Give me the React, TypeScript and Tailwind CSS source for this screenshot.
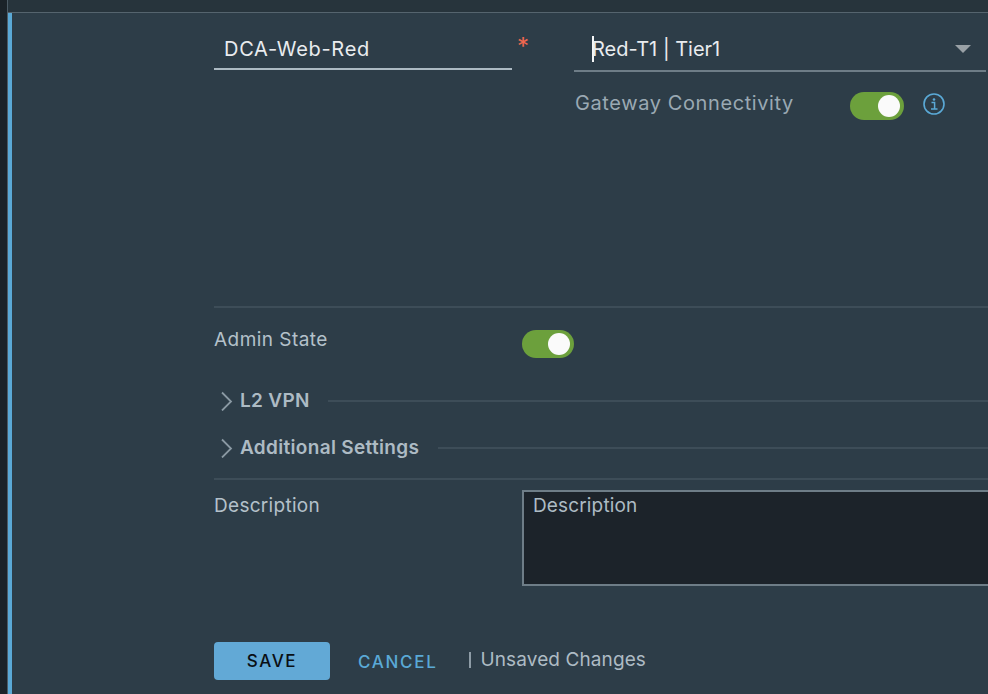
const font = "font-['Inter','Liberation_Sans',sans-serif]";

function Toggle({ width }: { width: string }) {
    return (
        <div className={`${width} flex h-7 shrink-0 items-center justify-end rounded-full bg-[#6ca03c] pr-[4px]`}>
            <div className="h-[22px] w-[22px] rounded-full bg-[#fafafa]" />
        </div>
    );
}

function Chevron() {
    return (
        <svg width="14" height="20" viewBox="0 0 14 20" fill="none" className="shrink-0">
            <path d="M2 1.5 L11 10.5 L2 19.5" stroke="#8a99a3" strokeWidth="1.8" />
        </svg>
    );
}

function Section({ title, gap }: { title: string; gap: string }) {
    return (
        <div className="flex h-6 items-center pl-[6px]">
            <Chevron />
            <span className={`ml-[6px] text-[19px] font-semibold tracking-[0.32px] text-[#adbbc4] ${gap}`}>{title}</span>
            <div className="h-[2px] flex-1 bg-[#3d4d58]" />
        </div>
    );
}

export default function App() {
    return (
        <div className={`flex h-[694px] w-[988px] overflow-hidden bg-[#2d3d48] ${font}`}>
            <div className="w-[7px] shrink-0 bg-[#1b2329]" />
            <div className="w-px shrink-0 bg-[#4d5c66]" />
            <div className="flex min-w-0 flex-1 flex-col">
                <div className="h-3 shrink-0 bg-[#27343c]" />
                <div className="h-px shrink-0 bg-[#55646e]" />
                <div className="flex flex-1">
                    <div className="w-1 shrink-0 bg-[#5aa9d6]" />
                    <div className="flex-1 pl-[202px]">
                        {/* name + gateway */}
                        <div className="flex items-start pt-[19px]">
                            <div className="w-[298px]">
                                <div className="flex h-[38px] items-center border-b-2 border-[#acbac3] pb-[3px] pl-[10px] text-[20px] tracking-[0.7px] text-[#e9ecef]">
                                    DCA-Web-Red
                                </div>
                            </div>
                            <span className="ml-[5px] mt-[3px] w-[57px] text-[24px] leading-6 text-[#f0674f]">*</span>
                            <div className="w-[412px]">
                                <div className="flex h-[40px] items-center justify-between border-b-2 border-[#6e7d87] pb-[4px] pl-[18px] pr-[15px]">
                                    <span className="flex items-center text-[20px] text-[#e9ecef]">
                                        <span className="-mr-[2px] h-[26px] w-[2px] bg-[#f5f7f8]" />
                                        Red-T1 | Tier1
                                    </span>
                                    <svg width="16" height="8" viewBox="0 0 16 8" className="mb-[1px]">
                                        <path d="M0 0 H16 L8 8 Z" fill="#99a1a6" />
                                    </svg>
                                </div>
                                <div className="mt-[16px] flex items-center pl-[1px]">
                                    <span className="mb-[3px] w-[275px] text-[20px] tracking-[0.6px] text-[#9aa9b3]">Gateway Connectivity</span>
                                    <div className="mt-[3px]">
                                        <Toggle width="w-[54px]" />
                                    </div>
                                    <svg width="24" height="24" viewBox="0 0 24 24" fill="none" className="mb-[2px] ml-[18px]">
                                        <circle cx="12" cy="12" r="10" stroke="#5aa9d6" strokeWidth="1.6" />
                                        <circle cx="12" cy="7.5" r="1.3" fill="#5aa9d6" />
                                        <path d="M9.5 10.5 H12.6 V16.8 M9 17 H15.5" stroke="#5aa9d6" strokeWidth="1.5" />
                                    </svg>
                                </div>
                            </div>
                        </div>

                        <div className="mt-[185px] h-[2px] bg-[#3d4d58]" />

                        {/* admin state */}
                        <div className="mt-[22px] flex items-start">
                            <span className="w-[308px] text-[19px] leading-5 tracking-[0.45px] text-[#b4c1ca]">Admin State</span>
                            <Toggle width="w-[52px]" />
                        </div>

                        <div className="mt-[31px] flex flex-col gap-[23px]">
                            <Section title="L2 VPN" gap="mr-[18px]" />
                            <Section title="Additional Settings" gap="mr-[19px]" />
                        </div>

                        <div className="mt-[18px] h-[2px] bg-[#3d4d58]" />

                        {/* description */}
                        <div className="mt-[10px] flex items-start">
                            <span className="w-[308px] pt-[4px] text-[19px] leading-6 tracking-[0.3px] text-[#b4c1ca]">Description</span>
                            <div className="h-24 flex-1 border-2 border-r-0 border-[#6e7d87] bg-[#1c232a] pl-[9px] pt-[2px] text-[19px] leading-6 tracking-[0.15px] text-[#adbbc4]">
                                Description
                            </div>
                        </div>

                        {/* actions */}
                        <div className="mt-[56px] flex items-center">
                            <div className="flex h-[38px] w-[116px] items-center justify-center rounded-[4px] bg-[#62a9d6] pt-[2px] text-[17px] font-medium tracking-[1.6px] text-[#0a0f14]">
                                SAVE
                            </div>
                            <span className="ml-[28px] mt-[3px] text-[17px] font-medium tracking-[1.7px] text-[#5aa9d6]">CANCEL</span>
                            <div className="mb-[3px] ml-[31px] h-4 w-[2px] bg-[#8e9ca6]" />
                            <span className="mb-[2px] ml-[10px] text-[19px] tracking-[0.1px] text-[#adbbc4]">Unsaved Changes</span>
                        </div>
                    </div>
                </div>
            </div>
        </div>
    );
}
